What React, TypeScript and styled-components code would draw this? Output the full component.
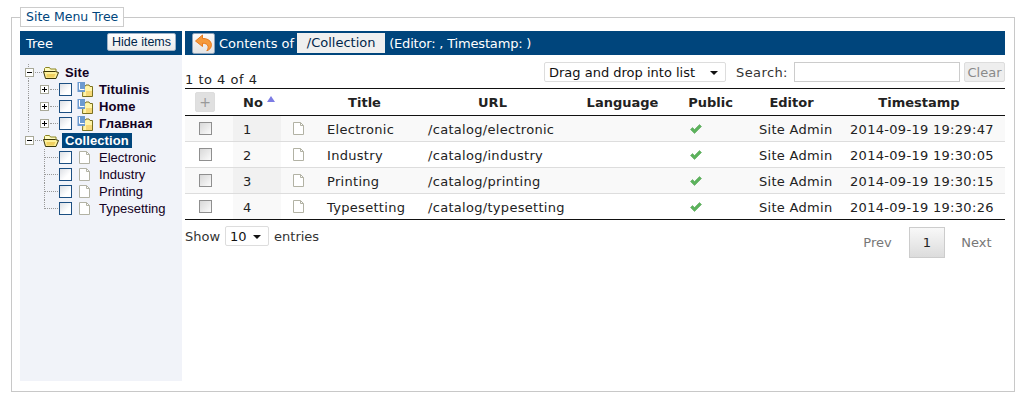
import styled, { createGlobalStyle } from 'styled-components';

const GlobalStyle = createGlobalStyle`
	html, body {
		margin: 0;
		padding: 0;
		background: #fff;
	}
	body {
		font-family: 'DejaVu Sans', Verdana, sans-serif;
		font-size: 13px;
		color: #222;
	}
`;

const Page = styled.div`
	width: 1027px;
	height: 404px;
	padding: 7px 12px 0 11px;
	box-sizing: border-box;
	overflow: hidden;
`;

const Fieldset = styled.fieldset`
	margin: 0;
	padding: 4px 9px 9px 8px;
	width: 1004px;
	height: 385px;
	box-sizing: border-box;
	border: 1px solid #c8c8c8;
	min-width: 0;
`;

const Legend = styled.legend`
	margin-left: 0;
	padding: 0 5px;
	height: 18px;
	line-height: 18px;
	border: 1px solid #ccc;
	background: #fff;
	color: #00457c;
	font-size: 12.5px;
	box-sizing: content-box;
`;

const Columns = styled.div`
	display: flex;
	gap: 3px;
	height: 350px;
`;

const TreePanel = styled.aside`
	width: 162px;
	flex-shrink: 0;
	background: #f1f3f9;
`;

const Bar = styled.div`
	height: 24px;
	background: #00457c;
	color: #fff;
	display: flex;
	align-items: center;
`;

const TreeBar = styled(Bar)`
	justify-content: space-between;
	padding: 1px 6px 0 6px;
	box-sizing: border-box;
	font-size: 13px;
`;

const HideButton = styled.button`
	font-family: 'Liberation Sans', Arial, sans-serif;
	font-size: 12.5px;
	height: 18px;
	width: 69px;
	padding: 0;
	color: #00264a;
	background: linear-gradient(#fff, #ececec);
	border: 1px solid #9fb2c6;
	border-radius: 2px;
	margin-top: -3px;
`;

const TreeList = styled.ul`
	list-style: none;
	margin: 0;
	padding: 9px 0 0;
	font-family: 'Liberation Sans', Arial, sans-serif;
	font-size: 13px;
	color: #110022;
`;

const TreeRow = styled.li<{ $depth: number; $guide?: boolean; $last?: boolean }>`
	position: relative;
	height: 17px;
	display: flex;
	align-items: center;
	padding-left: ${(p) => (p.$depth === 0 ? 5 : 20)}px;
	&::before {
		content: ${(p) => (p.$guide ? '""' : 'none')};
		position: absolute;
		left: 8px;
		top: 0;
		height: 17px;
		border-left: 1px dotted #999;
	}
	&::after {
		content: ${(p) => (p.$depth === 1 && !p.$guide ? '""' : 'none')};
		position: absolute;
		left: 24px;
		top: 0;
		height: ${(p) => (p.$last ? 9 : 17)}px;
		border-left: 1px dotted #999;
	}
`;

const Toggle = styled.span`
	width: 9px;
	height: 9px;
	flex-shrink: 0;
	display: block;
	position: relative;
	z-index: 1;
	line-height: 0;
`;

const Dash = styled.span<{ $width: number; $inset?: number }>`
	width: ${(p) => p.$width}px;
	margin: 0 1px 0 ${(p) => p.$inset ?? 1}px;
	border-top: 1px dotted #999;
	flex-shrink: 0;
`;

const TreeCheck = styled.span`
	width: 13px;
	height: 13px;
	box-sizing: border-box;
	border: 1px solid #1c4f82;
	background: linear-gradient(135deg, #dcdfe4, #fff 65%);
	flex-shrink: 0;
	margin-right: 5px;
`;

const NodeIcon = styled.svg`
	flex-shrink: 0;
	display: block;
`;

const NodeLabel = styled.span<{ $bold?: boolean; $selected?: boolean }>`
	font-weight: ${(p) => (p.$bold ? 700 : 400)};
	letter-spacing: ${(p) => (p.$bold ? 0.1 : 0)}px;
	margin-left: 3px;
	padding: 0 3px;
	line-height: 15px;
	height: 15px;
	color: ${(p) => (p.$selected ? '#fff' : 'inherit')};
	background: ${(p) => (p.$selected ? '#00457c' : 'transparent')};
`;

const Main = styled.main`
	width: 820px;
	flex-shrink: 0;
`;

const ContentsBar = styled(Bar)`
	padding-left: 7px;
	font-size: 13px;
`;

const BackButton = styled.button`
	width: 23px;
	height: 21px;
	padding: 0;
	border: 1px solid #8aa0b8;
	border-radius: 2px;
	background: linear-gradient(#fafafa, #e4e4e4);
	display: flex;
	align-items: center;
	justify-content: center;
	margin-right: 4px;
`;

const PathBox = styled.span`
	background: #efefef;
	color: #00264a;
	height: 20px;
	line-height: 20px;
	width: 88px;
	text-align: center;
	margin: 0 3px 0 3px;
`;

const ContentsMeta = styled.span`
	letter-spacing: -0.18px;
	margin-left: 1px;
`;

const Toolbar = styled.div`
	height: 33px;
	display: flex;
	align-items: flex-end;
	justify-content: space-between;
`;

const InfoText = styled.span`
	padding-bottom: 1px;
	font-size: 13px;
	line-height: 15px;
	letter-spacing: 0.5px;
`;

const Controls = styled.div`
	display: flex;
	align-items: center;
	padding-bottom: 6px;
`;

const SelectBox = styled.span<{ $width: number }>`
	position: relative;
	display: block;
	width: ${(p) => p.$width}px;
	height: 20px;
	&::after {
		content: '';
		position: absolute;
		right: 8px;
		top: 9px;
		border: 4px solid transparent;
		border-top-color: #111;
		border-bottom: 0;
	}
`;

const NativeSelect = styled.select`
	appearance: none;
	width: 100%;
	height: 100%;
	box-sizing: border-box;
	border: 1px solid #ddd;
	border-radius: 2px;
	background: #fff;
	color: #111;
	font: 13px 'DejaVu Sans', Verdana, sans-serif;
	padding: 0 4px;
`;

const SearchLabel = styled.label`
	width: 51px;
	margin: 0 7px 0 10px;
	color: #333;
	letter-spacing: 0.4px;
	white-space: nowrap;
`;

const SearchInput = styled.input`
	width: 166px;
	height: 20px;
	box-sizing: border-box;
	border: 1px solid #ccc;
	padding: 0 3px;
	background: #fff;
`;

const ClearButton = styled.button`
	width: 41px;
	height: 20px;
	padding: 0;
	margin-left: 4px;
	border: 1px solid #ddd;
	border-radius: 2px;
	background: #eee;
	color: #8a8a8a;
	font: 13px 'DejaVu Sans', Verdana, sans-serif;
`;

const Table = styled.table`
	width: 820px;
	table-layout: fixed;
	border-collapse: collapse;
	font-size: 13px;
	border-top: 1px solid #111;
	border-bottom: 1px solid #111;
`;

const HeadRow = styled.tr`
	height: 27px;
	border-bottom: 1px solid #111;
`;

const HeadCell = styled.th<{ $flush?: boolean }>`
	padding: ${(p) => (p.$flush ? '0' : '0 8px 0 0')};
	font-weight: 700;
	text-align: center;
	color: #222;
	position: relative;
`;

const AddButton = styled.button`
	width: 20px;
	height: 20px;
	margin-left: 10px;
	padding: 0;
	display: block;
	border: 1px solid #ddd;
	border-radius: 2px;
	background: #e0e0e0;
	color: #999;
	font: 14px 'DejaVu Sans', Verdana, sans-serif;
`;

const SortArrow = styled.span`
	position: absolute;
	left: 34px;
	top: 7px;
	border-left: 4.5px solid transparent;
	border-right: 4.5px solid transparent;
	border-bottom: 6px solid #7c7ce4;
`;

const BodyRow = styled.tr<{ $odd: boolean }>`
	height: 26px;
	background: ${(p) => (p.$odd ? '#f9f9f9' : '#fff')};
	border-bottom: 1px solid #ddd;
	&:last-child {
		border-bottom: 0;
	}
`;

const Cell = styled.td<{ $sorted?: 'odd' | 'even' }>`
	padding: 1px 0 0 ${(p) => (p.$sorted ? 10 : 9)}px;
	white-space: nowrap;
	overflow: hidden;
	color: #222;
	letter-spacing: 0.3px;
	background: ${(p) => (p.$sorted === 'odd' ? '#f1f1f1' : p.$sorted === 'even' ? '#f9f9f9' : 'transparent')};
`;

const RowCheck = styled.span`
	display: block;
	width: 13px;
	height: 13px;
	margin: -1px 0 0 5px;
	box-sizing: border-box;
	border: 1px solid #8f8f8f;
	background: linear-gradient(135deg, #d8d8d8, #fbfbfb);
`;

const RowIcon = styled.span`
	display: block;
	margin: -1px 0 0 1px;
`;

const PublicMark = styled.svg`
	display: block;
	margin: -1px 0 0 2px;
`;

const Footer = styled.div`
	display: flex;
	justify-content: space-between;
	align-items: flex-start;
	padding-top: 6px;
`;

const LengthControl = styled.div`
	display: flex;
	align-items: center;
	gap: 5px;
	color: #333;
`;

const Pager = styled.nav`
	display: flex;
	align-items: center;
	margin-top: 1px;
`;

const PageLink = styled.a<{ $current?: boolean }>`
	box-sizing: border-box;
	width: ${(p) => (p.$current ? 36 : 60)}px;
	height: 31px;
	line-height: 29px;
	text-align: center;
	color: ${(p) => (p.$current ? '#222' : '#777')};
	border: 1px solid ${(p) => (p.$current ? '#ccc' : 'transparent')};
	background: ${(p) => (p.$current ? 'linear-gradient(#f8f8f8, #dcdcdc)' : 'none')};
	&:first-child {
		padding-right: 3px;
	}
	&:last-child {
		padding-left: 3px;
	}
`;

function ToggleIcon({ open }: { open: boolean }) {
	return (
		<Toggle>
			<svg width="9" height="9" viewBox="0 0 9 9">
				<rect x="0.5" y="0.5" width="8" height="8" fill="#fff" stroke="#a8a898" />
				<path d="M2 4.500h5" stroke="#000" />
				{!open && <path d="M4.500 2v5" stroke="#000" />}
			</svg>
		</Toggle>
	);
}

function OpenFolder() {
	return (
		<NodeIcon width="16" height="12" viewBox="0 0 16 12">
			<path d="M1.500 4V1.500l1-1h4l1 1.500h5.500v2.500" fill="#fffbc0" stroke="#8a8420" />
			<path d="M.5 4.500h12l3 1-2.500 6H2.500z" fill="#fdf09a" stroke="#3a3608" />
			<path d="M3.500 7h9l-1.500 3.500H3.500z" fill="#f0d060" />
		</NodeIcon>
	);
}

function PageFolder() {
	return (
		<NodeIcon width="16" height="15" viewBox="0 0 16 15">
			<path d="M6 4.500h2l1-1.500h3l1 1.500h2.500v10H5.500z" fill="#fff4a8" stroke="#7a7020" />
			<path d="M9 9h6v5H9z" fill="#f6d878" />
			<rect x="0.5" y="0" width="7.500" height="10" fill="#6c9ad0" />
			<path d="M2.500 1V7.500H7.500" stroke="#fff" fill="none" />
		</NodeIcon>
	);
}

function PageIcon() {
	return (
		<NodeIcon width="16" height="13" viewBox="0 0 16 13">
			<path d="M2.500.500h7l3 3v9h-10z" fill="#fff" stroke="#b2b2a4" />
			<path d="M9.500.500v3h3" fill="none" stroke="#b2b2a4" />
		</NodeIcon>
	);
}

function CheckMark() {
	return (
		<PublicMark width="12" height="10" viewBox="0 0 12 10">
			<path d="M.5 5.500L2.500 3.500 4.500 5.500 9.500.5 11.500 2.500 4.500 9.500z" fill="#5cb35c" stroke="#4f9f4f" strokeWidth="0.5" />
		</PublicMark>
	);
}

function BackArrow() {
	return (
		<svg width="19" height="18" viewBox="0 0 19 18">
			<path
				d="M8.500 1L1.500 7 8.500 12.500V9.200c3 0 5 1 5.500 3 .3 1.500-.2 3.300-1.200 4.500 3.500-1 5-4 4.500-7.200C16.300 6 12.500 4.300 8.500 4.500z"
				fill="#f59a3c"
				stroke="#e87a1c"
				strokeLinejoin="round"
			/>
		</svg>
	);
}

const rows = [
	{ no: 1, title: 'Electronic', url: '/catalog/electronic', time: '2014-09-19 19:29:47' },
	{ no: 2, title: 'Industry', url: '/catalog/industry', time: '2014-09-19 19:30:05' },
	{ no: 3, title: 'Printing', url: '/catalog/printing', time: '2014-09-19 19:30:15' },
	{ no: 4, title: 'Typesetting', url: '/catalog/typesetting', time: '2014-09-19 19:30:26' },
];

const columnWidths = [48, 48, 37, 101, 155, 105, 71, 91, 164];

function App() {
	return (
		<Page>
			<GlobalStyle />
			<Fieldset>
				<Legend>Site Menu Tree</Legend>
				<Columns>
					<TreePanel>
						<TreeBar>
							Tree
							<HideButton>Hide items</HideButton>
						</TreeBar>
						<TreeList>
							<TreeRow $depth={0} $guide>
								<ToggleIcon open />
								<Dash $width={7} />
								<OpenFolder />
								<NodeLabel $bold>Site</NodeLabel>
							</TreeRow>
							{['Titulinis', 'Home', 'Главная'].map((name) => (
								<TreeRow key={name} $depth={1} $guide>
									<ToggleIcon open={false} />
									<Dash $width={8} />
									<TreeCheck />
									<PageFolder />
									<NodeLabel $bold>{name}</NodeLabel>
								</TreeRow>
							))}
							<TreeRow $depth={0}>
								<ToggleIcon open />
								<Dash $width={7} />
								<OpenFolder />
								<NodeLabel $bold $selected>
									Collection
								</NodeLabel>
							</TreeRow>
							{rows.map((row, i) => (
								<TreeRow key={row.no} $depth={1} $last={i === rows.length - 1}>
									<Dash $width={13} $inset={5} />
									<TreeCheck />
									<PageIcon />
									<NodeLabel>{row.title}</NodeLabel>
								</TreeRow>
							))}
						</TreeList>
					</TreePanel>
					<Main>
						<ContentsBar>
							<BackButton>
								<BackArrow />
							</BackButton>
							Contents of
							<PathBox>/Collection</PathBox>
							<ContentsMeta>(Editor: , Timestamp: )</ContentsMeta>
						</ContentsBar>
						<Toolbar>
							<InfoText>1 to 4 of 4</InfoText>
							<Controls>
								<SelectBox $width={182}>
									<NativeSelect defaultValue="drag">
										<option value="drag">Drag and drop into list</option>
									</NativeSelect>
								</SelectBox>
								<SearchLabel>Search:</SearchLabel>
								<SearchInput type="text" />
								<ClearButton>Clear</ClearButton>
							</Controls>
						</Toolbar>
						<Table>
							<colgroup>
								{columnWidths.map((w, i) => (
									<col key={i} width={w} />
								))}
							</colgroup>
							<thead>
								<HeadRow>
									<HeadCell $flush>
										<AddButton>+</AddButton>
									</HeadCell>
									<HeadCell>
										No
										<SortArrow />
									</HeadCell>
									<HeadCell />
									<HeadCell>Title</HeadCell>
									<HeadCell>URL</HeadCell>
									<HeadCell>Language</HeadCell>
									<HeadCell>Public</HeadCell>
									<HeadCell>Editor</HeadCell>
									<HeadCell>Timestamp</HeadCell>
								</HeadRow>
							</thead>
							<tbody>
								{rows.map((row, i) => (
									<BodyRow key={row.no} $odd={i % 2 === 0}>
										<Cell>
											<RowCheck />
										</Cell>
										<Cell $sorted={i % 2 === 0 ? 'odd' : 'even'}>{row.no}</Cell>
										<Cell>
											<RowIcon>
												<PageIcon />
											</RowIcon>
										</Cell>
										<Cell>{row.title}</Cell>
										<Cell>{row.url}</Cell>
										<Cell />
										<Cell>
											<CheckMark />
										</Cell>
										<Cell>Site Admin</Cell>
										<Cell>{row.time}</Cell>
									</BodyRow>
								))}
							</tbody>
						</Table>
						<Footer>
							<LengthControl>
								Show
								<SelectBox $width={44}>
									<NativeSelect defaultValue="10">
										<option value="10">10</option>
									</NativeSelect>
								</SelectBox>
								entries
							</LengthControl>
							<Pager>
								<PageLink>Prev</PageLink>
								<PageLink $current>1</PageLink>
								<PageLink>Next</PageLink>
							</Pager>
						</Footer>
					</Main>
				</Columns>
			</Fieldset>
		</Page>
	);
}

export default App;
